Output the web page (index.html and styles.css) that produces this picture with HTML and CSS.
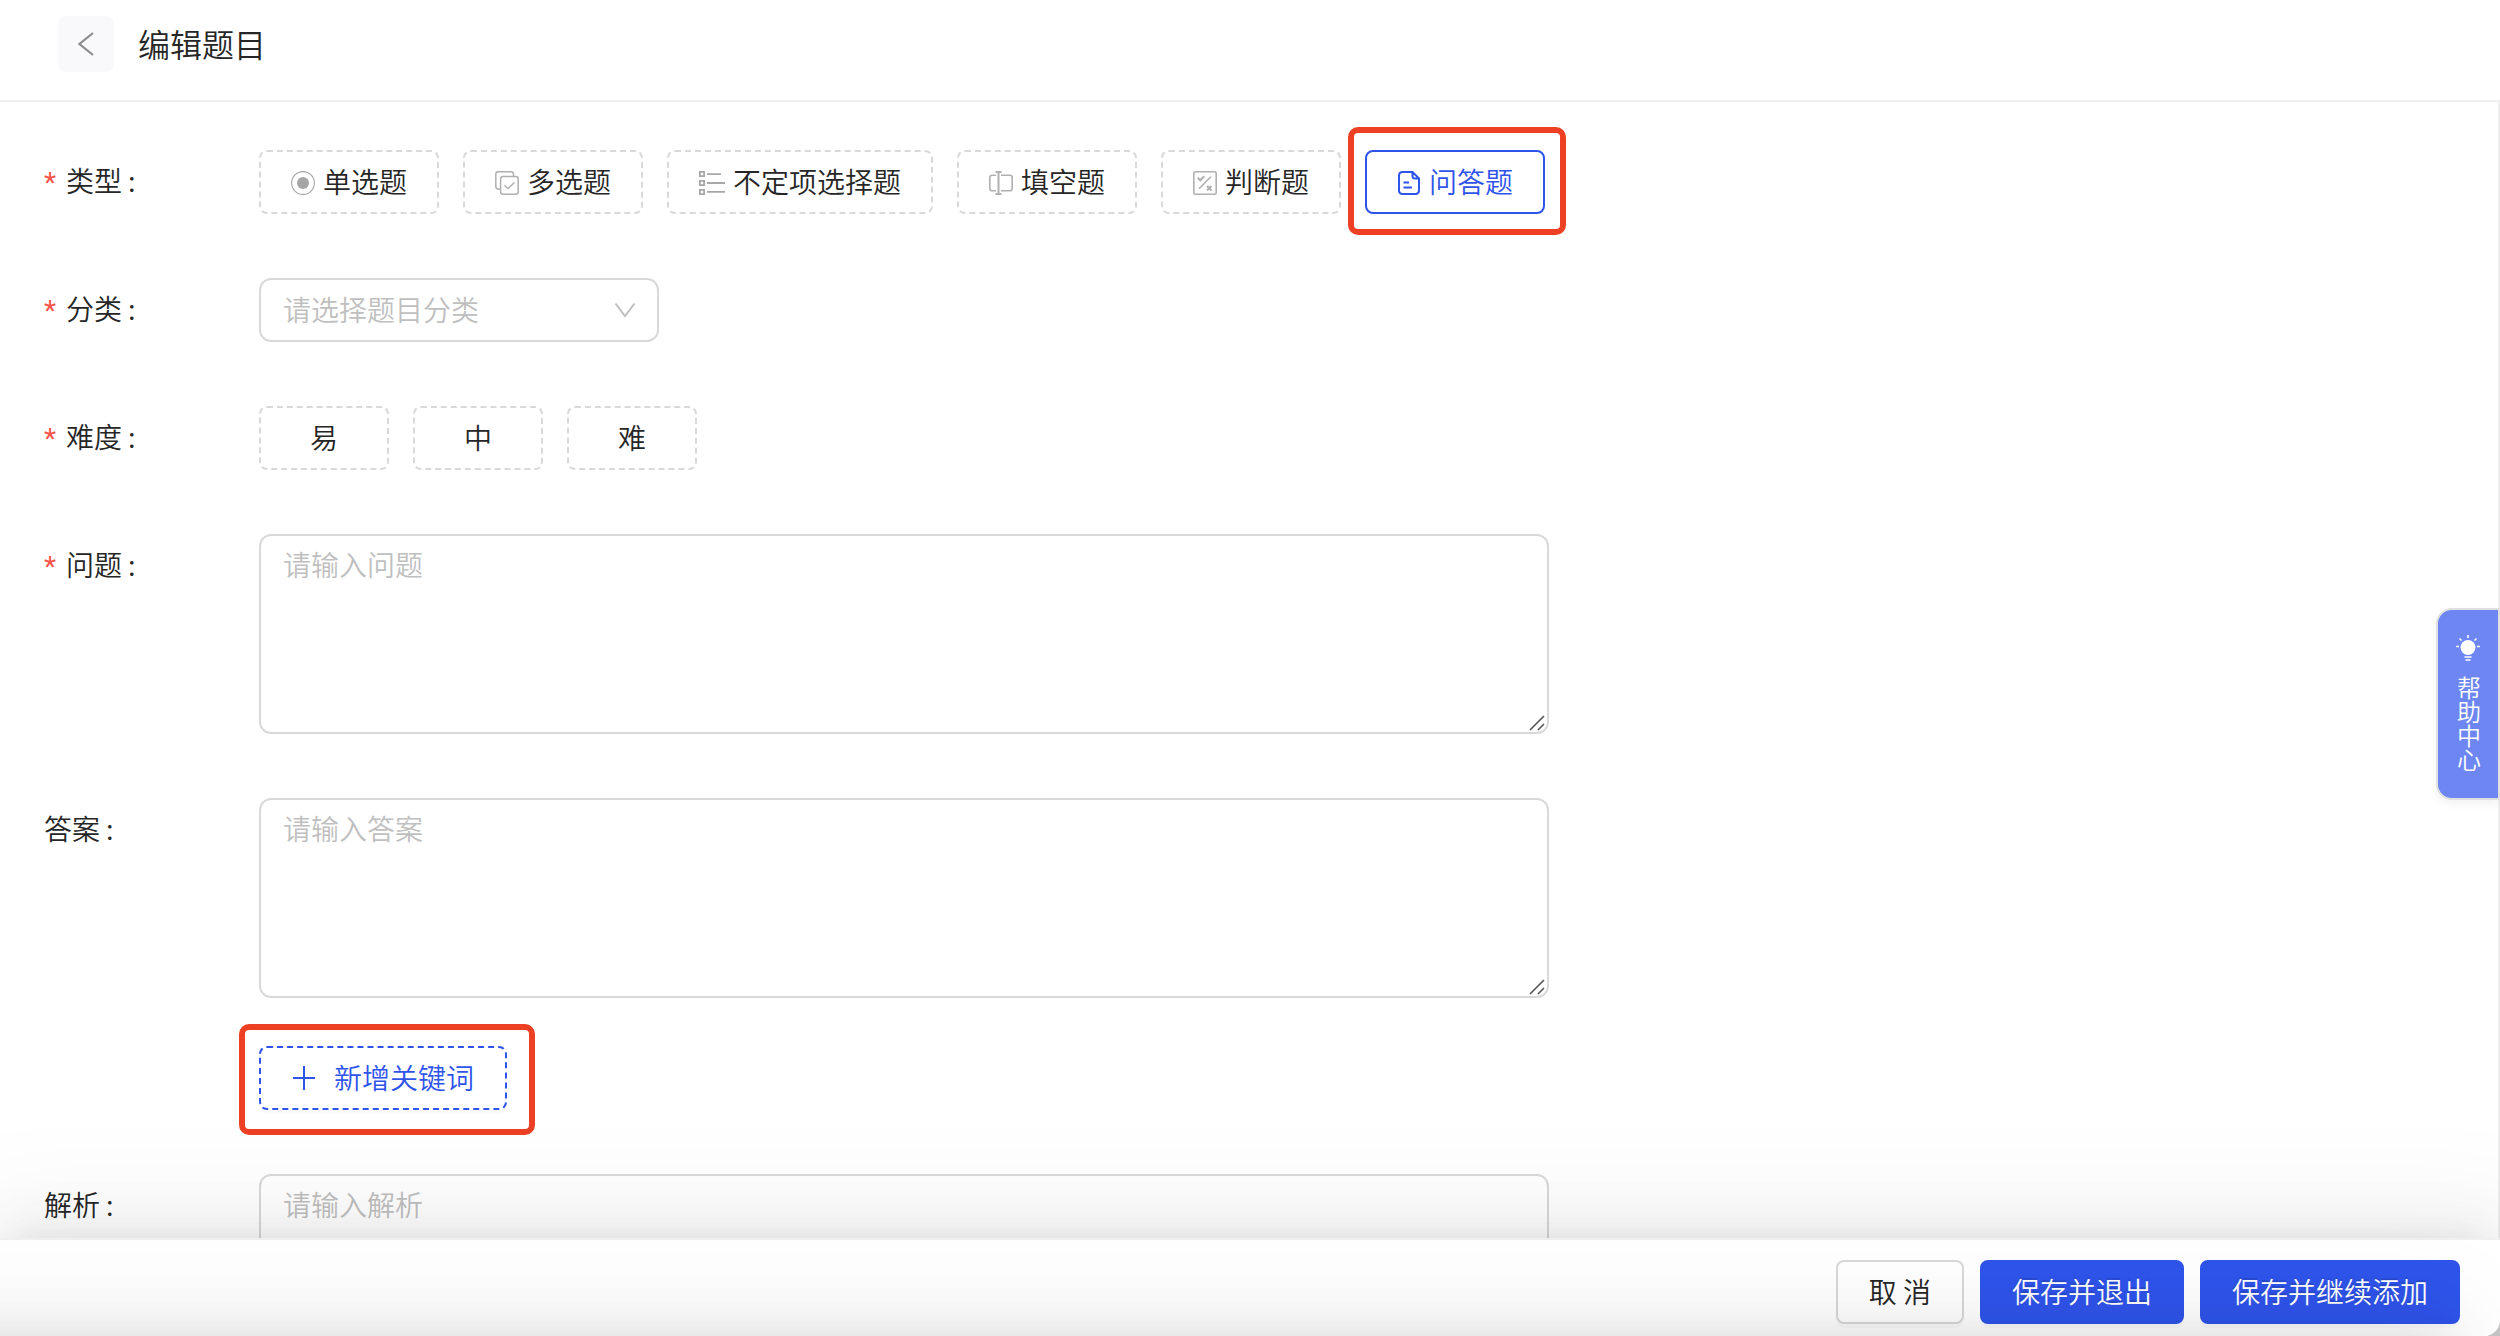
FILE: index.html
```html
<!DOCTYPE html>
<html lang="zh-CN">
<head>
    <meta charset="UTF-8">
    <meta name="viewport" content="width=device-width, initial-scale=1.0">
    <title>编辑题目</title>
    <link rel="stylesheet" href="styles.css">
</head>
<body>
    <div class="page">
        <header class="header">
            <button type="button" class="back" aria-label="返回">
                <svg width="16" height="24" viewBox="0 0 16 24"><path d="M15 1L1.500 12L15 23" fill="none" stroke="#8c8c8c" stroke-width="2.2"/></svg>
            </button>
            <h1>编辑题目</h1>
        </header>

        <main class="content">
            <div class="row">
                <div class="label"><span class="required">*</span>类型<span class="colon">:</span></div>
                <div class="options types">
                    <button type="button" class="option">
                        <svg width="24" height="24" viewBox="0 0 24 24"><circle cx="12" cy="12" r="11.4" fill="none" stroke="#a6a6a6" stroke-width="1.1"/><circle cx="12" cy="12" r="6" fill="#a6a6a6"/></svg>
                        单选题
                    </button>
                    <button type="button" class="option">
                        <svg width="24" height="24" viewBox="0 0 24 24" fill="none" stroke="#b0b0b0" stroke-width="1.5"><path d="M5.5 18H3.2A2.5 2.5 0 0 1 .8 15.500V3.200A2.500 2.500 0 0 1 3.200 .8H16A2.500 2.500 0 0 1 18.500 3.200V5.500"/><rect x="5.600" y="5.600" width="17.600" height="17.600" rx="2.500"/><path d="M9.500 14.500L13 17.500L19.500 11.500"/></svg>
                        多选题
                    </button>
                    <button type="button" class="option">
                        <svg width="26" height="24" viewBox="0 0 26 24" fill="none" stroke="#a8a8a8" stroke-width="1.800"><rect x=".9" y=".9" width="4.200" height="4.200"/><rect x=".9" y="9.900" width="4.200" height="4.200"/><rect x=".9" y="18.900" width="4.200" height="4.200"/><path d="M8 3.200H22M8 12H26M8 20.800H26"/></svg>
                        不定项选择题
                    </button>
                    <button type="button" class="option">
                        <svg width="24" height="24" viewBox="0 0 24 24" fill="none" stroke="#b0b0b0" stroke-width="1.600"><path d="M7 4.200H3A2.200 2.200 0 0 0 .8 6.400V17.600A2.200 2.200 0 0 0 3 19.800H7M12 4.200H21A2.200 2.200 0 0 1 23.200 6.400V17.600A2.200 2.200 0 0 1 21 19.800H12"/><path d="M9.500 1V23M6.500 1H12.500M6.500 23H12.500" stroke-width="2"/></svg>
                        填空题
                    </button>
                    <button type="button" class="option">
                        <svg width="24" height="24" viewBox="0 0 24 24" fill="none" stroke="#b0b0b0" stroke-width="1.600"><rect x=".8" y=".8" width="22.400" height="22.400" rx="1.500"/><path d="M6 17.800L18 5.500"/><path d="M4.800 6.800L7.300 9.300L11.300 5.300M14 15L18.500 19.500M18.500 15L14 19.500" stroke-width="2"/></svg>
                        判断题
                    </button>
                    <button type="button" class="option active">
                        <svg width="24" height="24" viewBox="0 0 24 24" fill="none" stroke="#2f54eb" stroke-width="2"><path d="M15.500 1H5A3.500 3.500 0 0 0 2 4.500V19.500A3.500 3.500 0 0 0 5 23H19A3.500 3.500 0 0 0 22 19.500V7.500L15.500 1V5A2.500 2.500 0 0 0 18 7.500H22M6.500 11.500H12M6.500 16.500H15"/></svg>
                        问答题
                    </button>
                    <span class="highlight highlight-type"></span>
                </div>
            </div>

            <div class="row">
                <div class="label"><span class="required">*</span>分类<span class="colon">:</span></div>
                <div class="select">
                    <span>请选择题目分类</span>
                    <svg width="22" height="16" viewBox="0 0 22 16"><path d="M1.500 1.500L11 14L20.500 1.500" fill="none" stroke="#bfbfbf" stroke-width="2"/></svg>
                </div>
            </div>

            <div class="row">
                <div class="label"><span class="required">*</span>难度<span class="colon">:</span></div>
                <div class="options">
                    <button type="button" class="option level">易</button>
                    <button type="button" class="option level">中</button>
                    <button type="button" class="option level">难</button>
                </div>
            </div>

            <div class="row">
                <div class="label"><span class="required">*</span>问题<span class="colon">:</span></div>
                <div class="field">
                    <textarea placeholder="请输入问题"></textarea>
                    <svg class="grip" width="16" height="16" viewBox="0 0 16 16"><path d="M1 15L15 1M9 15L15 9" stroke="#555" stroke-width="1.600"/></svg>
                </div>
            </div>

            <div class="row">
                <div class="label">答案<span class="colon">:</span></div>
                <div class="answer">
                    <div class="field">
                        <textarea placeholder="请输入答案"></textarea>
                        <svg class="grip" width="16" height="16" viewBox="0 0 16 16"><path d="M1 15L15 1M9 15L15 9" stroke="#555" stroke-width="1.600"/></svg>
                    </div>
                    <div class="keyword">
                        <button type="button" class="option add">
                            <svg width="24" height="24" viewBox="0 0 24 24"><path d="M12 0V24M1 12H23" stroke="#2f54eb" stroke-width="2"/></svg>
                            新增关键词
                        </button>
                        <span class="highlight highlight-add"></span>
                    </div>
                </div>
            </div>

            <div class="row">
                <div class="label">解析<span class="colon">:</span></div>
                <div class="field">
                    <textarea placeholder="请输入解析"></textarea>
                </div>
            </div>
        </main>

        <footer class="footer">
            <button type="button" class="btn cancel">取 消</button>
            <button type="button" class="btn primary">保存并退出</button>
            <button type="button" class="btn primary">保存并继续添加</button>
        </footer>

        <aside class="help">
            <svg width="24" height="26" viewBox="0 0 24 26" fill="none" stroke="#fff" stroke-width="1.600"><circle cx="12" cy="12.500" r="7.500" fill="#fff" stroke="none"/><path d="M12 0V3M3.500 3.500L5.500 5.500M20.500 3.500L18.500 5.500M0 11.500H3M21 11.500H24M8.500 22H15.500M9.500 25H14.500"/></svg>
            <span>帮助中心</span>
        </aside>
        <div class="bottom-shade"></div>
        <div class="corner"></div>
    </div>
</body>
</html>
```
FILE: styles.css
```css
* {
    box-sizing: border-box;
}
body {
    margin: 0;
    font-family: "Noto Sans CJK SC", sans-serif;
    font-size: 28px;
    font-weight: 350;
    color: #262626;
    background: #fff;
}
button,
textarea {
    font: inherit;
    color: inherit;
    margin: 0;
}
svg {
    display: block;
    flex: none;
}
.page {
    position: relative;
    display: flex;
    flex-direction: column;
    height: 1336px;
    overflow: hidden;
}

/* header */
.header {
    flex: none;
    display: flex;
    gap: 24px;
    height: 102px;
    padding: 16px 58px 0;
    border-bottom: 2px solid #f0f0f0;
}
.back {
    display: flex;
    align-items: center;
    justify-content: center;
    width: 56px;
    height: 56px;
    padding: 0;
    border: none;
    border-radius: 8px;
    background: #f9f9fb;
}
.header h1 {
    margin: 0;
    font-size: 32px;
    font-weight: 350;
    line-height: 54px;
}

/* form */
.content {
    flex: 1;
    min-height: 0;
    display: flex;
    flex-direction: column;
    gap: 64px;
    padding: 48px 0 0 44px;
    border-right: 2px solid #efefef;
    overflow: hidden;
}
.row {
    flex: none;
    display: flex;
}
.label {
    width: 215px;
    height: 64px;
    line-height: 60px;
}
.required {
    display: inline-block;
    width: 22px;
    color: #f5554a;
    font-family: Roboto, sans-serif;
    font-weight: 400;
}
.colon {
    margin-left: 6px;
}
.options {
    position: relative;
    display: flex;
    gap: 24px;
}
.option {
    display: flex;
    align-items: center;
    justify-content: center;
    gap: 8px;
    height: 64px;
    padding: 0 30px 3px;
    border: 2px dashed #d9d9d9;
    border-radius: 8px;
    background: #fff;
    line-height: 56px;
    white-space: nowrap;
}
.option svg {
    margin-top: 5px;
}
.option.active {
    border: 2px solid #2f54eb;
    color: #2f54eb;
}
.level {
    width: 130px;
}
.select {
    display: flex;
    align-items: center;
    justify-content: space-between;
    width: 400px;
    height: 64px;
    padding: 0 21px 0 22px;
    border: 2px solid #d9d9d9;
    border-radius: 12px;
    color: #bfbfbf;
    line-height: 56px;
}
.select span {
    margin-top: -3px;
}
.field {
    position: relative;
    width: 1290px;
    height: 200px;
}
textarea {
    display: block;
    width: 100%;
    height: 100%;
    padding: 6px 22px;
    border: 2px solid #d9d9d9;
    border-radius: 12px;
    background: none;
    line-height: 44px;
    resize: none;
}
textarea::placeholder {
    color: #bfbfbf;
}
.grip {
    position: absolute;
    right: 4px;
    bottom: 3px;
}
.keyword {
    position: relative;
    display: flex;
    margin-top: 48px;
}
.add {
    gap: 18px;
    width: 248px;
    border-color: #2f54eb;
    color: #2f54eb;
    box-shadow: 0 4px 0 rgba(0, 0, 0, 0.02);
}
.add svg {
    margin-top: 3px;
}

/* red frames around the parts to click */
.highlight {
    position: absolute;
    border: 6px solid #ed4024;
    border-radius: 10px;
    pointer-events: none;
}
.highlight-type {
    top: -23px;
    right: -21px;
    width: 218px;
    height: 108px;
}
.highlight-add {
    top: -22px;
    left: -20px;
    width: 296px;
    height: 111px;
}

/* footer */
.footer {
    position: relative;
    flex: none;
    display: flex;
    justify-content: flex-end;
    gap: 16px;
    height: 98px;
    padding: 20px 40px 0;
    border-top: 2px solid #f0f0f0;
    background: #fff;
    box-shadow: 0 -12px 32px -16px rgba(0, 0, 0, 0.08), 0 -18px 56px 0 rgba(0, 0, 0, 0.05), 0 -24px 96px 32px rgba(0, 0, 0, 0.03);
}
.btn {
    height: 64px;
    padding: 0 30px 2px;
    border: 2px solid #d9d9d9;
    border-radius: 8px;
    background: #fff;
    line-height: 56px;
    white-space: nowrap;
    box-shadow: 0 4px 0 rgba(0, 0, 0, 0.02);
}
.cancel {
    width: 128px;
}
.primary {
    border-color: #2f54eb;
    background: #2f54eb;
    color: #fff;
    text-shadow: 0 -2px 0 rgba(0, 0, 0, 0.12);
}
.bottom-shade {
    position: absolute;
    top: 1336px;
    left: -200px;
    width: 2660px;
    height: 400px;
    box-shadow: 0 -12px 32px -16px rgba(0, 0, 0, 0.08), 0 -18px 56px 0 rgba(0, 0, 0, 0.05), 0 -24px 96px 24px rgba(0, 0, 0, 0.03);
    pointer-events: none;
}
.corner {
    position: absolute;
    right: 0;
    bottom: 0;
    width: 12px;
    height: 16px;
    background: radial-gradient(circle at -4px 0, transparent 15.5px, #c4c4c4 16.500px);
}

/* help tab */
.help {
    position: absolute;
    top: 608px;
    right: 0;
    display: flex;
    flex-direction: column;
    align-items: center;
    gap: 14px;
    width: 64px;
    height: 192px;
    padding: 25px 0 0;
    border: 2px solid #e0e0e3;
    border-radius: 16px 0 0 16px;
    background: #6d86f2;
    color: #fff;
    box-shadow: 0 4px 8px rgba(0, 0, 0, 0.05);
}
.help span {
    width: 24px;
    margin-left: 2px;
    font-size: 24px;
    line-height: 24px;
}
```
